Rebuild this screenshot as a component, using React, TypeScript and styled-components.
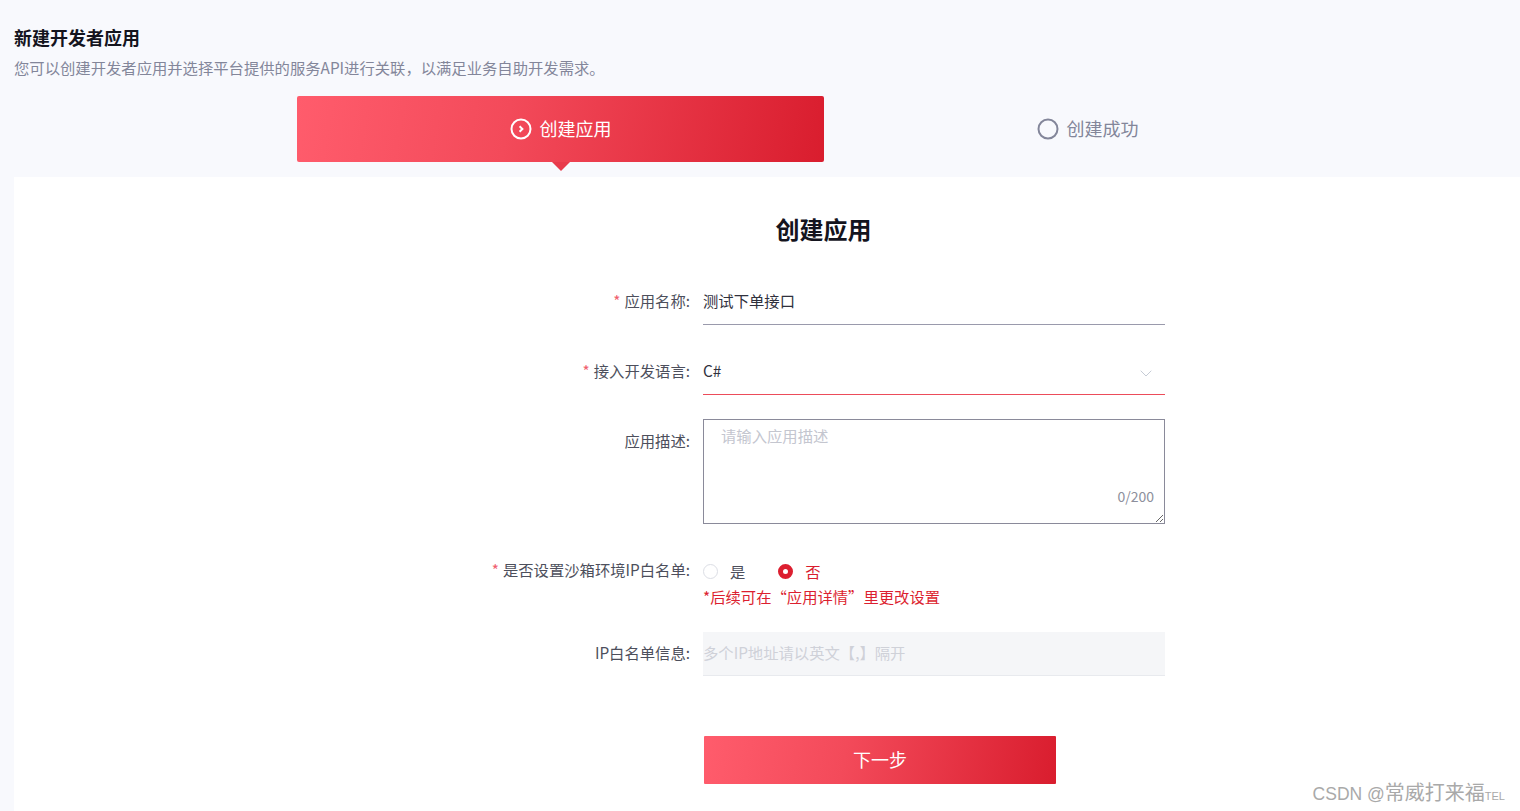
import React from "react";
import styled, { createGlobalStyle } from "styled-components";

const Global = createGlobalStyle`
  html, body { margin: 0; height: 100%; overflow: hidden; }
  body { font-family: "Noto Sans CJK SC", "Noto Sans", sans-serif; background: #f8f9fd; }
  #root { height: 100%; }
  * { box-sizing: border-box; }
`;

const Page = styled.div`
  height: 100%;
  display: flex;
  flex-direction: column;
  padding: 24px 0 0 14px;
  position: relative;
`;
const Heading = styled.h1`
  margin: 0;
  font-size: 18px;
  line-height: 26px;
  font-weight: 700;
  color: #14141e;
`;
const Sub = styled.p`
  margin: 7px 0 0;
  font-size: 15.33px;
  line-height: 20px;
  color: #83869a;
`;
const Steps = styled.div`
  display: flex;
  margin: 19px 0 0 283px;
`;
const Step = styled.div<{ $active?: boolean }>`
  position: relative;
  width: 527px;
  height: 66px;
  display: flex;
  align-items: center;
  justify-content: center;
  gap: 8px;
  font-size: 18px;
  border-radius: 2px;
  color: ${(p) => (p.$active ? "#fff" : "#83869a")};
  background: ${(p) => (p.$active ? "linear-gradient(100deg, #ff5c6c 0%, #f34a5a 40%, #d91d2e 100%)" : "transparent")};
`;
const StepText = styled.span`
  margin-top: -2px;
`;
const Arrow = styled.span`
  position: absolute;
  left: 255px;
  top: 66px;
  border-left: 9px solid transparent;
  border-right: 9px solid transparent;
  border-top: 9px solid #e83a4b;
`;
const Card = styled.main`
  flex: 1;
  margin-top: 15px;
  background: #fff;
  padding-top: 35px;
`;
const Form = styled.div`
  width: 683px;
  margin-left: 468px;
`;
const FormTitle = styled.h2`
  margin: 0 0 34px;
  font-size: 24px;
  line-height: 34px;
  font-weight: 700;
  text-align: center;
  color: #14141e;
`;
const Row = styled.div<{ $mb: number }>`
  display: grid;
  grid-template-columns: 208px 462px;
  column-gap: 13px;
  margin-bottom: ${(p) => p.$mb}px;
`;
const Label = styled.label<{ $h?: number }>`
  text-align: right;
  font-size: 15.33px;
  line-height: ${(p) => p.$h ?? 40}px;
  color: #4d4f5c;
  white-space: nowrap;
`;
const Star = styled.span`
  color: #f0606e;
  margin-right: 4px;
`;
const TextInput = styled.input`
  display: block;
  width: 100%;
  height: 45px;
  border: 0;
  border-bottom: 1px solid #9a9aac;
  outline: none;
  padding: 0 0 4px;
  font: 15.33px "Noto Sans CJK SC", sans-serif;
  color: #30313d;
  background: transparent;
`;
const SelectBox = styled.div`
  height: 45px;
  display: flex;
  align-items: center;
  justify-content: space-between;
  padding: 0 13px 4px 0;
  border-bottom: 1px solid #ec4c5a;
  font-size: 15.33px;
  color: #30313d;
  svg { margin-top: 6px; }
`;
const AreaWrap = styled.div`
  position: relative;
  height: 105px;
`;
const Area = styled.textarea`
  display: block;
  width: 100%;
  height: 105px;
  border: 1px solid #8a8a9a;
  border-radius: 0;
  outline: none;
  resize: vertical;
  padding: 4px 17px;
  font: 15.33px/22px "Noto Sans CJK SC", sans-serif;
  &::placeholder { color: #c4c6cf; opacity: 1; }
`;
const Counter = styled.span`
  position: absolute;
  right: 11px;
  bottom: 18px;
  font-size: 14px;
  line-height: 20px;
  color: #8d8f9c;
`;
const RadioLine = styled.div`
  display: flex;
  align-items: center;
  height: 22px;
  font-size: 15.33px;
  color: #4d4f5c;
`;
const RadioItem = styled.span<{ $checked?: boolean }>`
  display: inline-flex;
  align-items: center;
  gap: 12px;
  margin-right: 33px;
  color: ${(p) => (p.$checked ? "#d91d2e" : "#4d4f5c")};
`;
const RadioDot = styled.span<{ $checked?: boolean }>`
  width: 15px;
  height: 15px;
  border-radius: 50%;
  display: inline-block;
  background: #fff;
  border: ${(p) => (p.$checked ? "5px solid #dc1f30" : "1px solid #dcdee5")};
`;
const Note = styled.div`
  margin-top: 4px;
  font-size: 15.33px;
  line-height: 20px;
  color: #dc1f30;
`;
const DisabledInput = styled.input`
  display: block;
  width: 100%;
  height: 44px;
  border: 0;
  border-bottom: 1px solid #e8eaee;
  padding: 0 0 3px;
  outline: none;
  background: #f5f6f8;
  font: 15.33px "Noto Sans CJK SC", sans-serif;
  &::placeholder { color: #cfd1d8; opacity: 1; }
`;
const NextButton = styled.button`
  display: block;
  width: 352px;
  height: 48px;
  margin-left: 222px;
  padding: 0 0 3px;
  border: 0;
  border-radius: 1px;
  color: #fff;
  font: 18px "Noto Sans CJK SC", sans-serif;
  background: linear-gradient(100deg, #ff5c6c 0%, #f34a5a 40%, #d91d2e 100%);
`;
const Watermark = styled.div`
  position: absolute;
  right: 15px;
  bottom: 2px;
  font-family: "Liberation Sans", "Noto Sans CJK SC", sans-serif;
  font-size: 20px;
  line-height: 26px;
  color: #a9a9a9;
  white-space: nowrap;
`;
const WatermarkLatin = styled.span`
  font-size: 17.5px;
`;
const WatermarkTail = styled.span`
  font-size: 11px;
`;

const CircleChevron = () => (
  <svg width="22" height="22" viewBox="0 0 22 22" fill="none">
    <circle cx="11" cy="11" r="9.5" stroke="#fff" strokeWidth="2" />
    <path d="M9.6 8.2 12.4 11l-2.8 2.8" stroke="#fff" strokeWidth="2" />
  </svg>
);
const EmptyCircle = () => (
  <svg width="22" height="22" viewBox="0 0 22 22" fill="none">
    <circle cx="11" cy="11" r="9.5" stroke="#83869a" strokeWidth="2" />
  </svg>
);
const Chevron = () => (
  <svg width="12" height="7" viewBox="0 0 12 7" fill="none">
    <path d="M.7.7 6 6 11.3.7" stroke="#c6ccd6" strokeWidth="1" />
  </svg>
);

export default function App() {
  return (
    <Page>
      <Global />
      <Heading>新建开发者应用</Heading>
      <Sub>您可以创建开发者应用并选择平台提供的服务API进行关联，以满足业务自助开发需求。</Sub>
      <Steps>
        <Step $active>
          <CircleChevron />
          <StepText>创建应用</StepText>
          <Arrow />
        </Step>
        <Step>
          <EmptyCircle />
          <StepText>创建成功</StepText>
        </Step>
      </Steps>
      <Card>
        <Form>
          <FormTitle>创建应用</FormTitle>
          <Row $mb={25}>
            <Label><Star>*</Star>应用名称:</Label>
            <TextInput defaultValue="测试下单接口" />
          </Row>
          <Row $mb={24}>
            <Label><Star>*</Star>接入开发语言:</Label>
            <SelectBox>C#<Chevron /></SelectBox>
          </Row>
          <Row $mb={36}>
            <Label $h={42}>应用描述:</Label>
            <AreaWrap>
              <Area placeholder="请输入应用描述" />
              <Counter>0/200</Counter>
            </AreaWrap>
          </Row>
          <Row $mb={26}>
            <Label $h={18}><Star>*</Star>是否设置沙箱环境IP白名单:</Label>
            <div>
              <RadioLine>
                <RadioItem><RadioDot />是</RadioItem>
                <RadioItem $checked><RadioDot $checked />否</RadioItem>
              </RadioLine>
              <Note>*后续可在“应用详情”里更改设置</Note>
            </div>
          </Row>
          <Row $mb={60}>
            <Label>IP白名单信息:</Label>
            <DisabledInput disabled placeholder="多个IP地址请以英文【,】隔开" />
          </Row>
          <NextButton>下一步</NextButton>
        </Form>
      </Card>
      <Watermark><WatermarkLatin>CSDN @</WatermarkLatin>常威打来福<WatermarkTail>TEL</WatermarkTail></Watermark>
    </Page>
  );
}
